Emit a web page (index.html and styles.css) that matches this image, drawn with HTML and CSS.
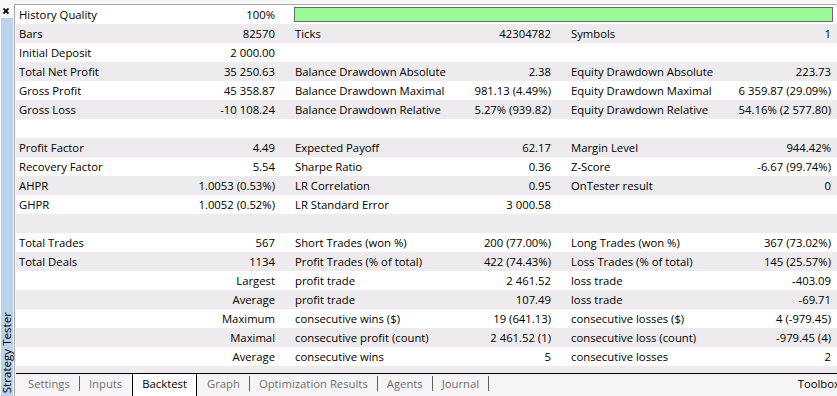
FILE: index.html
```html
<!DOCTYPE html>
<html lang="en">
<head>
  <meta charset="UTF-8" />
  <title>Strategy Tester - Backtest</title>
  <link rel="stylesheet" href="styles.css">
</head>
<body>
  <div class="window">
    <aside class="dock">
      <div class="dock-close">
        <svg width="6" height="6" viewBox="0 0 6 6"><path d="M0.5 0.5L5.5 5.5M5.5 0.5L0.5 5.5" stroke="#000" stroke-width="1.8"/></svg>
      </div>
      <div class="dock-bar">
        <span class="dock-title">Strategy Tester</span>
      </div>
    </aside>

    <main class="panel">
      <div class="report">
        <div class="row">
          <div class="cell"><span>History Quality</span><span>100%</span></div>
          <div class="quality"></div>
        </div>
        <div class="row">
          <div class="cell"><span>Bars</span><span>82570</span></div>
          <div class="cell"><span>Ticks</span><span>42304782</span></div>
          <div class="cell"><span>Symbols</span><span>1</span></div>
        </div>
        <div class="row">
          <div class="cell"><span>Initial Deposit</span><span>2 000.00</span></div>
        </div>
        <div class="row">
          <div class="cell"><span>Total Net Profit</span><span>35 250.63</span></div>
          <div class="cell"><span>Balance Drawdown Absolute</span><span>2.38</span></div>
          <div class="cell"><span>Equity Drawdown Absolute</span><span>223.73</span></div>
        </div>
        <div class="row">
          <div class="cell"><span>Gross Profit</span><span>45 358.87</span></div>
          <div class="cell"><span>Balance Drawdown Maximal</span><span>981.13 (4.49%)</span></div>
          <div class="cell"><span>Equity Drawdown Maximal</span><span>6 359.87 (29.09%)</span></div>
        </div>
        <div class="row">
          <div class="cell"><span>Gross Loss</span><span>-10 108.24</span></div>
          <div class="cell"><span>Balance Drawdown Relative</span><span>5.27% (939.82)</span></div>
          <div class="cell"><span>Equity Drawdown Relative</span><span>54.16% (2 577.80)</span></div>
        </div>
        <div class="row"></div>
        <div class="row">
          <div class="cell"><span>Profit Factor</span><span>4.49</span></div>
          <div class="cell"><span>Expected Payoff</span><span>62.17</span></div>
          <div class="cell"><span>Margin Level</span><span>944.42%</span></div>
        </div>
        <div class="row">
          <div class="cell"><span>Recovery Factor</span><span>5.54</span></div>
          <div class="cell"><span>Sharpe Ratio</span><span>0.36</span></div>
          <div class="cell"><span>Z-Score</span><span>-6.67 (99.74%)</span></div>
        </div>
        <div class="row">
          <div class="cell"><span>AHPR</span><span>1.0053 (0.53%)</span></div>
          <div class="cell"><span>LR Correlation</span><span>0.95</span></div>
          <div class="cell"><span>OnTester result</span><span>0</span></div>
        </div>
        <div class="row">
          <div class="cell"><span>GHPR</span><span>1.0052 (0.52%)</span></div>
          <div class="cell"><span>LR Standard Error</span><span>3 000.58</span></div>
        </div>
        <div class="row"></div>
        <div class="row">
          <div class="cell"><span>Total Trades</span><span>567</span></div>
          <div class="cell"><span>Short Trades (won %)</span><span>200 (77.00%)</span></div>
          <div class="cell"><span>Long Trades (won %)</span><span>367 (73.02%)</span></div>
        </div>
        <div class="row">
          <div class="cell"><span>Total Deals</span><span>1134</span></div>
          <div class="cell"><span>Profit Trades (% of total)</span><span>422 (74.43%)</span></div>
          <div class="cell"><span>Loss Trades (% of total)</span><span>145 (25.57%)</span></div>
        </div>
        <div class="row">
          <div class="cell"><span></span><span>Largest</span></div>
          <div class="cell"><span>profit trade</span><span>2 461.52</span></div>
          <div class="cell"><span>loss trade</span><span>-403.09</span></div>
        </div>
        <div class="row">
          <div class="cell"><span></span><span>Average</span></div>
          <div class="cell"><span>profit trade</span><span>107.49</span></div>
          <div class="cell"><span>loss trade</span><span>-69.71</span></div>
        </div>
        <div class="row">
          <div class="cell"><span></span><span>Maximum</span></div>
          <div class="cell"><span>consecutive wins ($)</span><span>19 (641.13)</span></div>
          <div class="cell"><span>consecutive losses ($)</span><span>4 (-979.45)</span></div>
        </div>
        <div class="row">
          <div class="cell"><span></span><span>Maximal</span></div>
          <div class="cell"><span>consecutive profit (count)</span><span>2 461.52 (1)</span></div>
          <div class="cell"><span>consecutive loss (count)</span><span>-979.45 (4)</span></div>
        </div>
        <div class="row">
          <div class="cell"><span></span><span>Average</span></div>
          <div class="cell"><span>consecutive wins</span><span>5</span></div>
          <div class="cell"><span>consecutive losses</span><span>2</span></div>
        </div>
      </div>

      <nav class="tabs">
        <span class="tab">Settings</span>
        <i class="sep"></i>
        <span class="tab">Inputs</span>
        <span class="tab active">Backtest</span>
        <span class="tab">Graph</span>
        <i class="sep"></i>
        <span class="tab">Optimization Results</span>
        <i class="sep"></i>
        <span class="tab">Agents</span>
        <i class="sep"></i>
        <span class="tab">Journal</span>
        <i class="sep"></i>
        <span class="toolbox">Toolbox</span>
      </nav>
    </main>
  </div>
</body>
</html>
```

FILE: styles.css
```css
* {
  box-sizing: border-box;
  margin: 0;
  padding: 0;
}

body {
  font-family: 'Open Sans', sans-serif;
  font-size: 11.3px;
  color: #000;
  background: #f7f7f7;
  overflow: hidden;
}

.window {
  display: flex;
  width: 837px;
  height: 396px;
}

/* docked side bar */
.dock {
  width: 14px;
  display: flex;
  flex-direction: column;
}

.dock-close {
  height: 18px;
  padding: 8px 0 0 3px;
  line-height: 0;
}

.dock-bar {
  flex: 1;
  margin-left: 1px;
  width: 12px;
  background: #bbd2eb;
  display: flex;
  flex-direction: column;
  justify-content: flex-end;
  align-items: center;
  padding-bottom: 3px;
}

.dock-title {
  writing-mode: vertical-rl;
  transform: rotate(180deg);
  font-size: 11.6px;
  line-height: 12px;
  white-space: nowrap;
}

/* main panel */
.panel {
  flex: 1;
  margin-top: 4px;
  border-top: 1px solid #a8a8a8;
  border-left: 1px solid #a8a8a8;
  padding-left: 1px;
  display: flex;
  flex-direction: column;
  min-width: 0;
}

.report {
  flex: 1;
  background: #eeebee;
}

.row {
  display: grid;
  grid-template-columns: 256px 256px 260px;
  column-gap: 20px;
  height: 19px;
  line-height: 19px;
  padding-left: 3px;
  background: #fff;
  white-space: nowrap;
}

.row:nth-child(even) {
  background: #eeebee;
}

.cell {
  display: flex;
  justify-content: space-between;
}

.quality {
  grid-column: 2 / 4;
  margin: 2px -2px 2px -1px;
  border: 1px solid #6a6a6a;
  background: #98fb98;
}

/* bottom tabs */
.tabs {
  height: 23px;
  border-top: 1px solid #000;
  background: #f7f4f7;
  display: flex;
  align-items: stretch;
  padding-left: 12px;
  overflow: hidden;
  white-space: nowrap;
}

.tab {
  color: #6f6f6f;
  line-height: 20px;
}

.sep {
  width: 1px;
  height: 15px;
  margin: 2px 9px 0 9px;
  background: #5f5f5f;
}

.tab.active {
  color: #000;
  background: #fff;
  border-left: 1px solid #000;
  border-right: 1px solid #000;
  padding: 0 9px;
  margin: 0 10px 0 10px;
}

.toolbox {
  margin-left: auto;
  margin-right: -3px;
  line-height: 20px;
}
```
